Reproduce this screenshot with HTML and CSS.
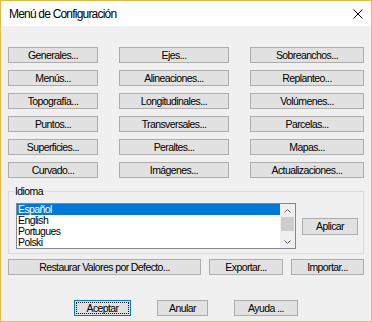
FILE: index.html
```html
<!DOCTYPE html>
<html lang="es">
<head>
    <meta charset="UTF-8">
    <title>Menú de Configuración</title>
    <link rel="stylesheet" href="styles.css">
</head>
<body>
    <div class="window">
        <div class="titlebar">
            <span class="title">Menú de Configuración</span>
            <span class="close">
                <svg width="10" height="10" viewBox="0 0 10 10">
                    <path d="M0.5 0.5 L9.5 9.5 M9.5 0.5 L0.5 9.5" stroke="#000" stroke-width="1" fill="none"/>
                </svg>
            </span>
        </div>

        <div class="content">
            <div class="grid">
                <button class="btn">Generales...</button>
                <button class="btn">Ejes...</button>
                <button class="btn">Sobreanchos...</button>

                <button class="btn">Menús...</button>
                <button class="btn">Alineaciones...</button>
                <button class="btn">Replanteo...</button>

                <button class="btn">Topografía...</button>
                <button class="btn">Longitudinales...</button>
                <button class="btn">Volúmenes...</button>

                <button class="btn">Puntos...</button>
                <button class="btn">Transversales...</button>
                <button class="btn">Parcelas...</button>

                <button class="btn">Superficies...</button>
                <button class="btn">Peraltes...</button>
                <button class="btn">Mapas...</button>

                <button class="btn">Curvado...</button>
                <button class="btn">Imágenes...</button>
                <button class="btn">Actualizaciones...</button>
            </div>

            <fieldset class="group">
                <legend>Idioma</legend>
                <div class="group-row">
                    <div class="listbox">
                        <ul class="items">
                            <li class="selected">Español</li>
                            <li>English</li>
                            <li>Portugues</li>
                            <li>Polski</li>
                        </ul>
                        <div class="scrollbar">
                            <span class="sb-btn">
                                <svg width="7" height="4" viewBox="0 0 7 4"><polyline points="0.5,3.5 3.5,0.5 6.5,3.5" fill="none" stroke="#606060"/></svg>
                            </span>
                            <span class="thumb"></span>
                            <span class="track"></span>
                            <span class="sb-btn">
                                <svg width="7" height="4" viewBox="0 0 7 4"><polyline points="0.5,0.5 3.5,3.5 6.5,0.5" fill="none" stroke="#606060"/></svg>
                            </span>
                        </div>
                    </div>
                    <button class="btn apply">Aplicar</button>
                </div>
            </fieldset>

            <div class="tools">
                <button class="btn restore">Restaurar Valores por Defecto...</button>
                <button class="btn export">Exportar...</button>
                <button class="btn import">Importar...</button>
            </div>

            <div class="actions">
                <button class="btn default accept">Aceptar</button>
                <button class="btn cancel">Anular</button>
                <button class="btn help">Ayuda ...</button>
            </div>
        </div>
    </div>
</body>
</html>
```

FILE: styles.css
```css
* {
    margin: 0;
    padding: 0;
    box-sizing: border-box;
}

body {
    background: #f0f0f0;
    font-family: "Liberation Sans", Arial, sans-serif;
    font-size: 10.5px;
    letter-spacing: -0.6px;
    color: #000;
}

.window {
    width: 372px;
    height: 322px;
    border: 1px solid #ebb93f;
    background: #f0f0f0;
}

/* Title bar */
.titlebar {
    height: 25px;
    background: #fff;
    display: flex;
    align-items: center;
    justify-content: space-between;
    padding: 0 8px 0 8px;
}

.title {
    font-size: 12px;
    letter-spacing: -0.8px;
}

.close {
    display: flex;
}

.content {
    padding: 21px 7px 0 7px;
}

/* Buttons */
.btn {
    font: inherit;
    letter-spacing: inherit;
    color: #000;
    background: #e1e1e1;
    border: 1px solid #adadad;
    height: 16px;
    line-height: 14px;
    padding: 0;
    text-align: center;
}

.grid {
    display: grid;
    grid-template-columns: 90px 110px 114px;
    grid-auto-rows: 16px;
    column-gap: 21px;
    row-gap: 7px;
}

/* Idioma group */
.group {
    border: 1px solid #dcdcdc;
    margin-top: 7px;
    padding: 5px 5px 4px 7px;
}

.group legend {
    padding: 0 1px;
    margin-left: -2px;
    line-height: 13px;
}

.group-row {
    display: flex;
    align-items: center;
}

.listbox {
    width: 280px;
    height: 46px;
    border: 1px solid #828790;
    background: #fff;
    display: flex;
}

.items {
    list-style: none;
    flex: 1;
    overflow: hidden;
}

.items li {
    height: 11px;
    line-height: 11px;
    padding-left: 1px;
    white-space: nowrap;
}

.items li.selected {
    background: #0078d7;
    color: #fff;
}

.scrollbar {
    width: 15px;
    background: #f0f0f0;
    display: flex;
    flex-direction: column;
}

.sb-btn {
    height: 13px;
    display: flex;
    align-items: center;
    justify-content: center;
}

.thumb {
    height: 14px;
    margin: 0 1px;
    background: #cdcdcd;
}

.track {
    flex: 1;
}

.apply {
    width: 56px;
    height: 17px;
    margin-left: 6px;
}

/* Bottom rows */
.tools {
    display: flex;
    gap: 8px;
    margin-top: 5px;
}

.restore { width: 193px; }
.export { width: 74px; }
.import { width: 73px; }

.actions {
    display: flex;
    gap: 26px;
    margin-top: 25px;
    padding-left: 66px;
}

.accept { width: 57px; }
.cancel { width: 51px; }
.help { width: 64px; }

.default {
    border-color: #0078d7;
    position: relative;
}

.default::after {
    content: '';
    position: absolute;
    top: 1px;
    left: 1px;
    right: 1px;
    bottom: 1px;
    border: 1px dotted #000;
}
```
